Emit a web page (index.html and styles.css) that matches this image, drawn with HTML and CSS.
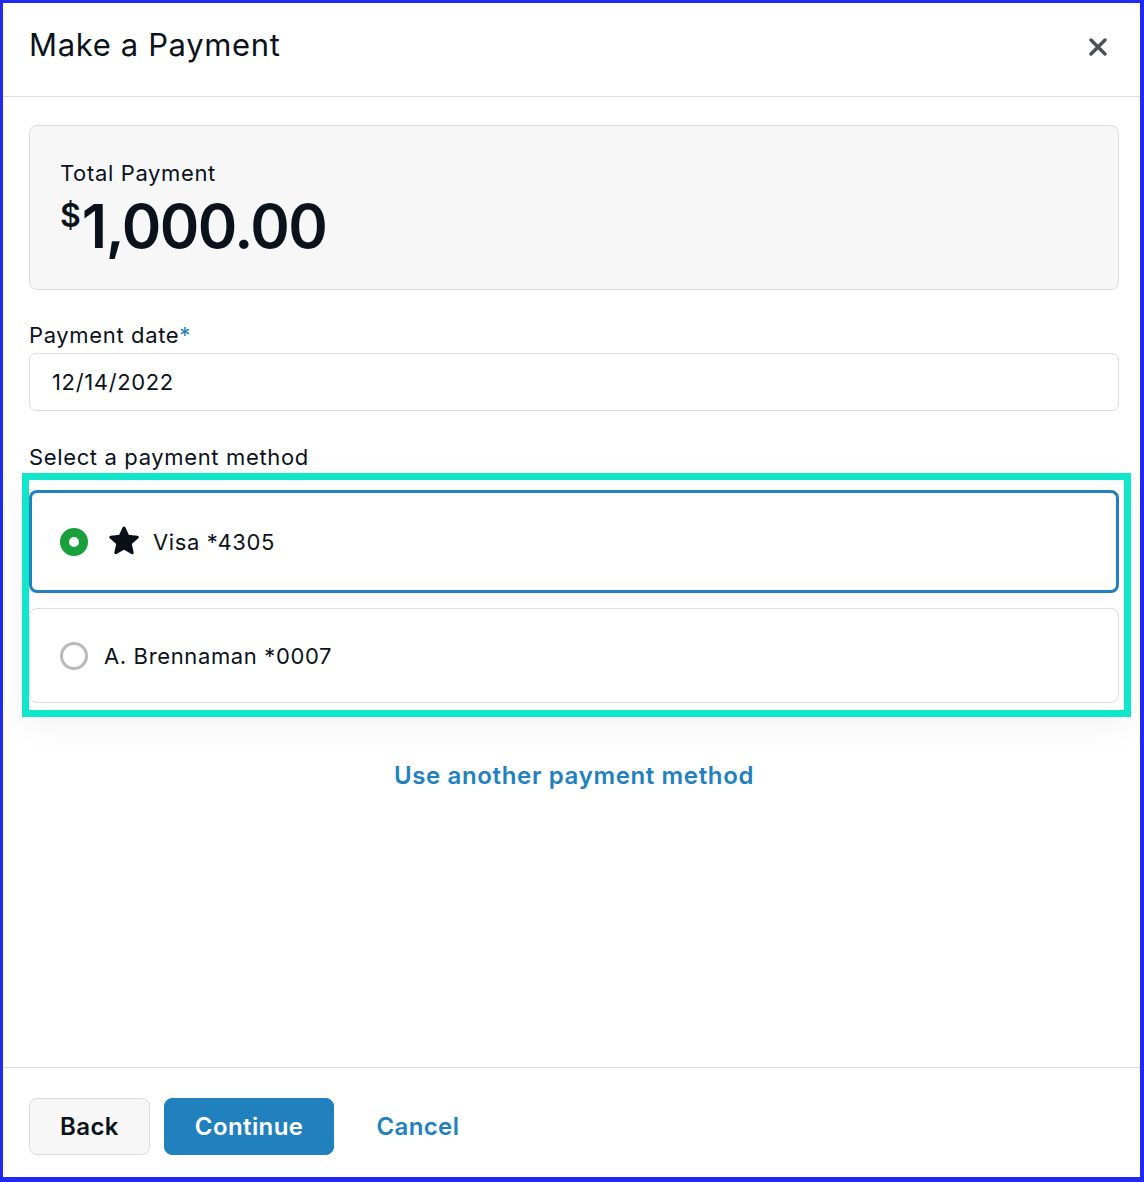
FILE: index.html
```html
<!DOCTYPE html>
<html lang="en">
<head>
  <meta charset="UTF-8">
  <meta name="viewport" content="width=device-width, initial-scale=1.0"/>
  <title>Make a Payment</title>
  <link rel="stylesheet" href="styles.css">
</head>
<body>

  <div class="frame">

    <!-- Modal Header -->
    <header class="modal-header">
      <h1>Make a Payment</h1>
      <button class="close-btn" aria-label="Close">
        <svg width="18" height="18" viewBox="0 0 18 18">
          <path d="M2 2 L16 16 M16 2 L2 16" stroke="#4b5058" stroke-width="3.4" stroke-linecap="round" fill="none"/>
        </svg>
      </button>
    </header>

    <!-- Modal Body -->
    <main class="modal-body">

      <div class="summary">
        <p class="summary-label">Total Payment</p>
        <p class="summary-amount"><span class="currency">$</span>1,000.00</p>
      </div>

      <label class="field-label">Payment date<span class="required">*</span></label>
      <div class="input">12/14/2022</div>

      <p class="field-label methods-label">Select a payment method</p>

      <div class="methods">
        <div class="method selected">
          <span class="radio checked"></span>
          <svg class="star" width="34" height="30" viewBox="0 0 32 30">
            <polygon points="16,2 19.8,10.2 29.3,11.2 22.2,17.5 24.2,26.8 16,22 7.8,26.8 9.8,17.5 2.7,11.2 12.2,10.2" fill="#0a0f18" stroke="#0a0f18" stroke-width="3" stroke-linejoin="round"/>
          </svg>
          <span class="method-name">Visa *4305</span>
        </div>
        <div class="method">
          <span class="radio"></span>
          <span class="method-name">A. Brennaman *0007</span>
        </div>
      </div>

      <a href="#" class="alt-link">Use another payment method</a>

    </main>

    <!-- Modal Footer -->
    <footer class="modal-footer">
      <button class="btn btn-secondary">Back</button>
      <button class="btn btn-primary">Continue</button>
      <button class="btn btn-link">Cancel</button>
    </footer>

  </div>

</body>
</html>
```

FILE: styles.css
```css
/* Global Styles */
* {
  margin: 0;
  padding: 0;
  box-sizing: border-box;
}

body {
  font-family: 'Inter', 'Noto Sans', sans-serif;
  color: #0b121b;
  background: #fff;
  letter-spacing: 0.04em;
}

.frame {
  height: 1182px;
  display: flex;
  flex-direction: column;
  border-style: solid;
  border-color: #2129f6;
  border-width: 3px 4px 5px 3px;
  background: #fff;
}

/* Header */
.modal-header {
  height: 94px;
  display: flex;
  justify-content: space-between;
  align-items: flex-start;
  padding: 24px 33px 0 26px;
  border-bottom: 1px solid #dedede;
}

.modal-header h1 {
  font-size: 31px;
  font-weight: 400;
  line-height: 36px;
}

.close-btn {
  background: none;
  border: none;
  margin-top: 11px;
  cursor: pointer;
}

/* Body */
.modal-body {
  padding: 28px 21px 0 26px;
  display: flex;
  flex-direction: column;
}

.summary {
  height: 165px;
  background: #f7f7f7;
  border: 1px solid #dcdcdc;
  border-radius: 8px;
  padding: 31px 30px 0;
}

.summary-label {
  font-size: 22px;
  line-height: 32px;
}

.summary-amount {
  font-size: 60px;
  font-weight: 600;
  line-height: 64px;
  margin-top: 5px;
  letter-spacing: -1.5px;
}

.currency {
  font-size: 32px;
  vertical-align: top;
  line-height: 44px;
  margin-right: 1px;
  letter-spacing: 0;
}

.field-label {
  font-size: 22px;
  line-height: 28px;
  margin-top: 31px;
  margin-bottom: 4px;
}

.required {
  color: #2181bf;
}

.input {
  height: 58px;
  border: 1px solid #dcdcdc;
  border-radius: 7px;
  padding: 0 22px;
  display: flex;
  align-items: center;
  font-size: 22px;
}

.methods-label {
  margin-top: 32px;
  margin-bottom: 19px;
}

/* Payment method cards */
.methods {
  position: relative;
  display: flex;
  flex-direction: column;
  gap: 15px;
}

.methods::after {
  content: '';
  position: absolute;
  top: -17px;
  left: -7px;
  right: -12px;
  bottom: -14px;
  border: 7px solid #10e6c9;
  box-shadow: 0 10px 30px rgba(0, 0, 0, 0.05);
  pointer-events: none;
}

.method {
  height: 95px;
  display: flex;
  align-items: center;
  padding: 0 30px;
  border: 1px solid #dcdcdc;
  border-radius: 8px;
  background: #fff;
  font-size: 22px;
}

.method.selected {
  height: 103px;
  border: 3px solid #2181bf;
  padding: 0 28px;
}

.radio {
  width: 28px;
  height: 28px;
  border-radius: 50%;
  border: 3px solid #b9b9b9;
  margin-right: 16px;
  flex-shrink: 0;
}

.radio.checked {
  border: 9px solid #17a03c;
  margin-right: 19px;
}

.star {
  margin-right: 12px;
  margin-top: -2px;
}

.alt-link {
  align-self: center;
  margin-top: 58px;
  color: #2181bf;
  font-size: 24px;
  font-weight: 600;
  text-decoration: none;
}

/* Footer */
.modal-footer {
  margin-top: auto;
  border-top: 1px solid #dedede;
  padding: 30px 26px 0;
  height: 110px;
  display: flex;
  gap: 14px;
}

.btn {
  height: 57px;
  padding: 0 30px;
  border-radius: 8px;
  font-family: inherit;
  font-size: 24px;
  font-weight: 600;
  letter-spacing: 0.4px;
  cursor: pointer;
}

.btn-secondary {
  background: #f7f7f7;
  border: 1px solid #dcdcdc;
  color: #0b121b;
}

.btn-primary {
  background: #2181bf;
  border: 1px solid #2181bf;
  color: #fff;
}

.btn-link {
  background: none;
  border: none;
  color: #2181bf;
  padding: 0 28px;
}
```
